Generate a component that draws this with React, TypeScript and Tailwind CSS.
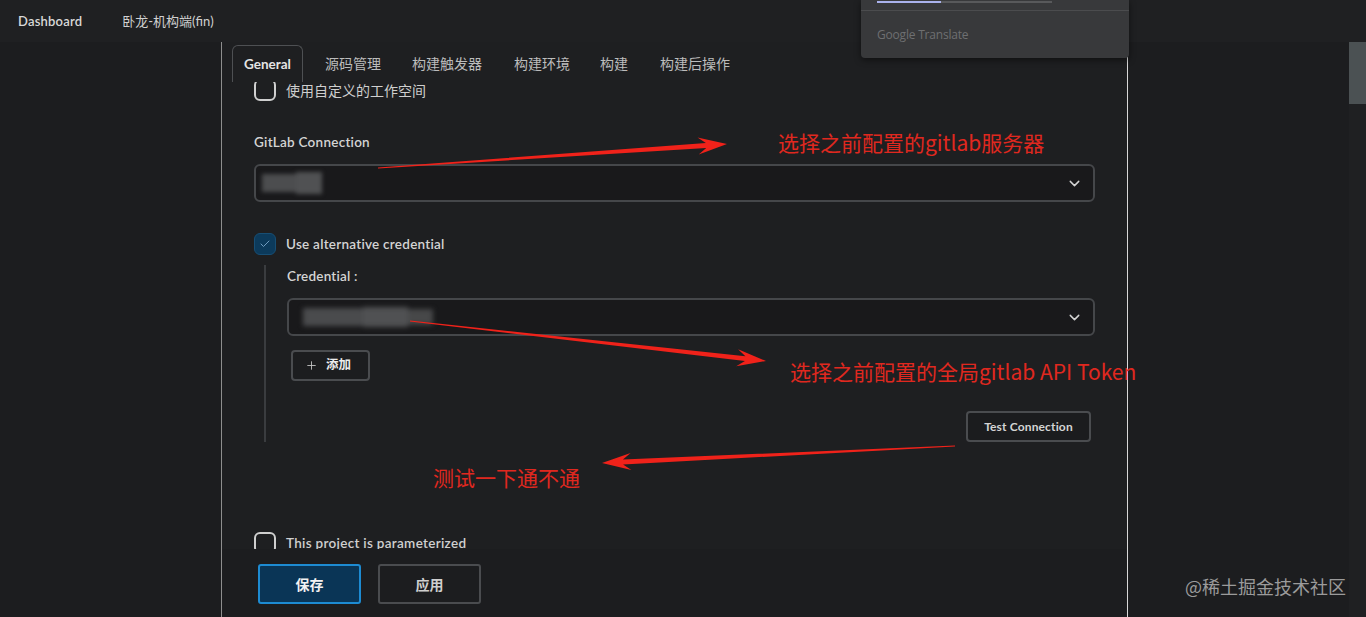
import React from "react";
import { ChevronDown, Check, Plus } from "lucide-react";

const FONT = "font-['Lato','Noto_Sans_CJK_SC',sans-serif]";

function arrowPoints(
  x0: number,
  y0: number,
  x1: number,
  y1: number,
  w0 = 0.8,
  w1 = 5,
  headLen = 26,
  headW = 8.5
) {
  const dx = x1 - x0;
  const dy = y1 - y0;
  const L = Math.hypot(dx, dy);
  const ux = dx / L;
  const uy = dy / L;
  const nx = -uy;
  const ny = ux;
  const bx = x1 - ux * headLen;
  const by = y1 - uy * headLen;
  const jx = bx + ux * 5;
  const jy = by + uy * 5;
  const pts: [number, number][] = [
    [x0 + (nx * w0) / 2, y0 + (ny * w0) / 2],
    [jx + (nx * w1) / 2, jy + (ny * w1) / 2],
    [bx + nx * headW - ux * 3, by + ny * headW - uy * 3],
    [x1, y1],
    [bx - nx * headW - ux * 3, by - ny * headW - uy * 3],
    [jx - (nx * w1) / 2, jy - (ny * w1) / 2],
    [x0 - (nx * w0) / 2, y0 - (ny * w0) / 2],
  ];
  return pts.map((p) => `${p[0].toFixed(1)},${p[1].toFixed(1)}`).join(" ");
}

function Checkbox({ checked }: { checked?: boolean }) {
  if (checked) {
    return (
      <div className="w-[22px] h-[22px] rounded-[6px] bg-[#0c3a5b] border border-[#174e74] flex items-center justify-center shrink-0">
        <Check size={12} strokeWidth={2} color="#6f9cc0" />
      </div>
    );
  }
  return (
    <div className="w-[22px] h-[22px] rounded-[6px] border-2 border-[#cfcfcf] shrink-0" />
  );
}

function Select({ blurW }: { blurW: "a" | "b" }) {
  return (
    <div className="h-[38px] rounded-[6px] border-2 border-[#45474a] bg-[#19191b] flex items-center pr-[10px] pl-[6px]">
      <div className="flex-1 flex items-center">
        {blurW === "a" ? (
          <div className="flex items-center gap-[0px] blur-[2px]">
            <div className="w-[34px] h-[18px] bg-[#4c4d4f]" />
            <div className="w-[26px] h-[22px] bg-[#505153]" />
          </div>
        ) : (
          <div className="flex items-center ml-[8px] blur-[2.5px]">
            <div className="w-[60px] h-[18px] bg-[#4a4b4d]" />
            <div className="w-[45px] h-[20px] bg-[#505153]" />
            <div className="w-[25px] h-[16px] bg-[#474849]" />
          </div>
        )}
      </div>
      <ChevronDown size={17} strokeWidth={2} color="#d4d4d4" />
    </div>
  );
}

export default function App() {
  return (
    <div
      className={`w-[1366px] h-[617px] relative overflow-hidden bg-[#1c1d1f] ${FONT} text-[#d2d2d2]`}
    >
      {/* Header */}
      <div className="h-[42px] bg-[#1f2022] flex items-center pl-[18px] pt-[2px] text-[13px] font-semibold text-[#d8d8d8]">
        <span className="tracking-[0.2px]">Dashboard</span>
        <span className="ml-[40px] font-normal text-[#d0d0d0]">卧龙-机构端(fin)</span>
      </div>

      {/* Body */}
      <div className="flex h-[575px]">
        <div className="w-[221px] shrink-0" />
        <div className="w-[907px] shrink-0 relative border-l border-l-[#8e8e8e] border-r border-r-[#d8d8d8] bg-[#1e1f21]">
          {/* Tabs */}
          <div className="relative z-10 flex items-end pt-[3px] pl-[10px] h-[40px]">
            <div className="h-[37px] px-[11px] flex items-center rounded-t-[6px] border border-[#4e5053] border-b-0 bg-[#1e1f21] text-[13.5px] font-bold text-[#e4e4e4]">
              General
            </div>
            <div className="h-[37px] flex items-center text-[14px] text-[#bcbcbc] ml-[22px]">源码管理</div>
            <div className="h-[37px] flex items-center text-[14px] text-[#bcbcbc] ml-[31px]">构建触发器</div>
            <div className="h-[37px] flex items-center text-[14px] text-[#bcbcbc] ml-[32px]">构建环境</div>
            <div className="h-[37px] flex items-center text-[14px] text-[#bcbcbc] ml-[30px]">构建</div>
            <div className="h-[37px] flex items-center text-[14px] text-[#bcbcbc] ml-[32px]">构建后操作</div>
          </div>

          <div className="px-[32px]">
            {/* custom workspace */}
            <div className="flex items-center gap-[10px] -mt-[3px] h-[22px]">
              <Checkbox />
              <span className="text-[14px] text-[#cfcfcf]">使用自定义的工作空间</span>
            </div>

            <div className="mt-[32px] text-[13.5px] tracking-[0.25px] font-semibold text-[#d4d4d4] leading-[18px]">
              GitLab Connection
            </div>
            <div className="mt-[13px]">
              <Select blurW="a" />
            </div>

            <div className="mt-[31px] flex items-center gap-[10px] h-[22px]">
              <Checkbox checked />
              <span className="text-[13.5px] tracking-[0.25px] font-semibold text-[#d4d4d4]">Use alternative credential</span>
            </div>

            {/* nested */}
            <div className="mt-[10px] ml-[10px] border-l-2 border-[#3a3c3f] pl-[21px] pb-[0px]">
              <div className="pt-[2px] text-[13.5px] tracking-[0.2px] font-semibold text-[#d4d4d4] leading-[18px]">
                Credential :
              </div>
              <div className="mt-[13px]">
                <Select blurW="b" />
              </div>
              <div className="mt-[14px] ml-[4px]">
                <button className="h-[31px] w-[79px] rounded-[4px] border-2 border-[#4a4c4f] bg-[#1c1d1f] flex items-center pl-[12px] gap-[8px] text-[12.5px] font-bold text-[#ececec]">
                  <Plus size={13} strokeWidth={1.6} color="#c8c8c8" />
                  <span>添加</span>
                </button>
              </div>
              <div className="mt-[30px] flex justify-end pr-[4px] pb-[0px]">
                <button className="h-[31px] w-[125px] rounded-[4px] border-2 border-[#4a4c4f] bg-[#1b1c1e] text-[12px] tracking-[0.15px] font-bold text-[#d4d4d4]">
                  Test Connection
                </button>
              </div>
            </div>

            <div className="mt-[90px] flex items-center gap-[10px] h-[22px]">
              <Checkbox />
              <span className="text-[13.5px] tracking-[0.3px] font-semibold text-[#d0d0d0]">This project is parameterized</span>
            </div>
          </div>

          {/* bottom sticky bar */}
          <div className="absolute left-0 right-0 bottom-0 h-[68px] bg-[#1c1d1f] flex items-start pt-[15px] pl-[36px] gap-[17px]">
            <button className="w-[103px] h-[40px] rounded-[3px] border-2 border-[#1d8bd2] bg-[#0a3556] text-[14px] font-bold text-[#f2f2f2]">
              保存
            </button>
            <button className="w-[103px] h-[40px] rounded-[3px] border-2 border-[#4a4c4f] bg-[#1c1d1f] text-[14px] font-bold text-[#cfcfcf]">
              应用
            </button>
          </div>
        </div>
        <div className="flex-1" />
      </div>

      {/* scrollbar */}
      <div className="absolute right-0 top-[42px] bottom-0 w-[17px] bg-[#1f2022]">
        <div className="h-[62px] bg-[#4b5153]" />
      </div>

      {/* Google Translate popup */}
      <div className="absolute left-[861px] top-0 w-[268px] h-[58px] bg-[#38393b] rounded-b-[4px] shadow-[0_2px_6px_rgba(0,0,0,0.5)]">
        <div className="h-[11px] border-b border-[#4b4c4e] relative">
          <div className="absolute left-[16px] top-[1px] h-[2px] w-[175px] bg-[#58595b]" />
          <div className="absolute left-[16px] top-[1px] h-[2px] w-[64px] bg-[#aab2ec]" />
        </div>
        <div className="pl-[16px] pt-[15px] text-[12px] text-[#6e6f71] font-['Open_Sans',sans-serif] tracking-[-0.2px]">
          Google Translate
        </div>
      </div>

      {/* annotation arrows */}
      <svg className="absolute inset-0 pointer-events-none" width={1366} height={617}>
        <polygon points={arrowPoints(378, 168, 727, 144)} fill="#f0221a" />
        <polygon points={arrowPoints(410, 321, 766, 361)} fill="#f0221a" />
        <polygon points={arrowPoints(955, 446, 602, 463)} fill="#f0221a" />
      </svg>

      {/* annotation text */}
      <div className="absolute left-[778px] top-[128px] text-[21px] leading-[28px] text-[#e0281f] font-['Noto_Sans_CJK_SC',sans-serif]">
        选择之前配置的gitlab服务器
      </div>
      <div className="absolute left-[790px] top-[357px] text-[21px] leading-[28px] text-[#e0281f] font-['Noto_Sans_CJK_SC',sans-serif]">
        选择之前配置的全局gitlab API Token
      </div>
      <div className="absolute left-[433px] top-[463px] text-[21px] leading-[28px] text-[#e0281f] font-['Noto_Sans_CJK_SC',sans-serif]">
        测试一下通不通
      </div>

      {/* watermark */}
      <div className="absolute left-[1185px] top-[574px] text-[18px] leading-[24px] text-[#9b9b9b] font-['Noto_Sans_CJK_SC',sans-serif]">
        @稀土掘金技术社区
      </div>
    </div>
  );
}
